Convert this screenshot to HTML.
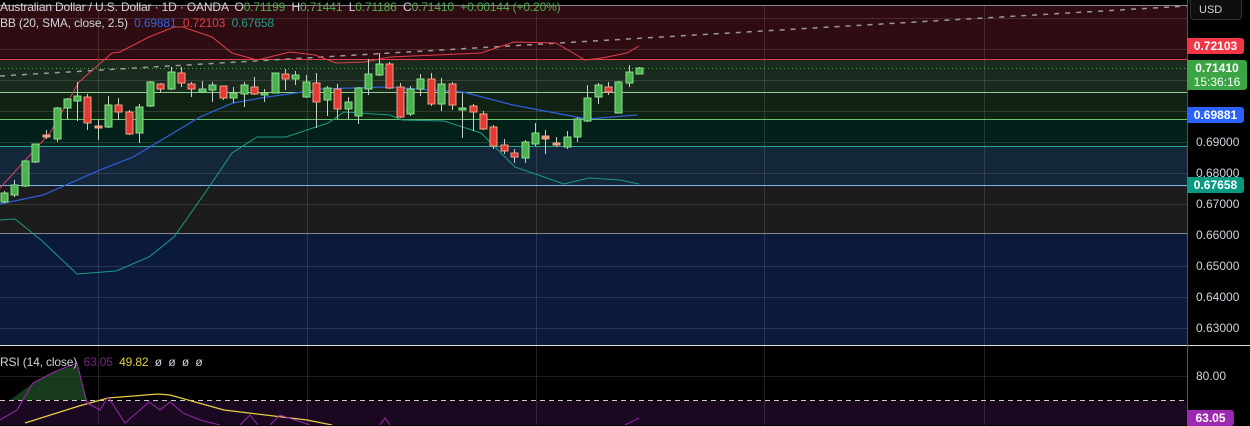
<!DOCTYPE html>
<html><head><meta charset="utf-8"><style>
body{margin:0;width:1250px;height:425px;background:#000;overflow:hidden;font-family:"Liberation Sans",sans-serif;position:relative}
svg{position:absolute;left:0;top:0}
.t{position:absolute;font-size:12px;color:#d1d4dc;white-space:nowrap;line-height:14px;letter-spacing:-0.15px}
.ax{position:absolute;left:1196px;font-size:12px;color:#d1d4dc;line-height:14px}
.b{position:absolute;left:1187px;width:57px;color:#fff;font-size:12px;font-weight:bold;text-align:center;border-radius:0 3px 3px 0;line-height:16px}
</style></head><body>
<svg width="1250" height="425" id="s">
<rect x="0" y="0" width="1187" height="5" fill="#000"/>
<rect x="0" y="5" width="1187" height="54" fill="#2e0c11"/>
<rect x="0" y="59" width="1187" height="33" fill="#1a2a1e"/>
<rect x="0" y="92" width="1187" height="27" fill="#0f2214"/>
<rect x="0" y="119" width="1187" height="27" fill="#04201a"/>
<rect x="0" y="146" width="1187" height="39" fill="#14263a"/>
<rect x="0" y="185" width="1187" height="48" fill="#1c1c1c"/>
<rect x="0" y="233" width="1187" height="112" fill="#0b1a3c"/>
<rect x="0" y="401" width="1187" height="24" fill="#1a0820"/>
<g stroke="#ffffff" stroke-opacity="0.12" stroke-width="1">
<line x1="98.5" y1="5" x2="98.5" y2="425"/><line x1="307.5" y1="5" x2="307.5" y2="425"/><line x1="536.5" y1="5" x2="536.5" y2="425"/><line x1="764.5" y1="5" x2="764.5" y2="425"/><line x1="984.5" y1="5" x2="984.5" y2="425"/>
<line x1="0" y1="18.5" x2="1187" y2="18.5"/><line x1="0" y1="49.5" x2="1187" y2="49.5"/><line x1="0" y1="80.5" x2="1187" y2="80.5"/><line x1="0" y1="111.5" x2="1187" y2="111.5"/><line x1="0" y1="142.5" x2="1187" y2="142.5"/><line x1="0" y1="173.5" x2="1187" y2="173.5"/><line x1="0" y1="204.5" x2="1187" y2="204.5"/><line x1="0" y1="266.5" x2="1187" y2="266.5"/><line x1="0" y1="297.5" x2="1187" y2="297.5"/><line x1="0" y1="328.5" x2="1187" y2="328.5"/><line x1="0" y1="376.5" x2="1187" y2="376.5"/>
</g>
<line x1="0" y1="5.5" x2="1187" y2="5.5" stroke="#888" stroke-width="1"/>
<line x1="0" y1="59.5" x2="1187" y2="59.5" stroke="#e0404a" stroke-width="1"/>
<line x1="0" y1="68.5" x2="1187" y2="68.5" stroke="#4caf50" stroke-dasharray="1 3"/>
<line x1="0" y1="92.5" x2="1187" y2="92.5" stroke="#8fd08f"/>
<line x1="0" y1="119.5" x2="1187" y2="119.5" stroke="#6cc070"/>
<line x1="0" y1="146.5" x2="1187" y2="146.5" stroke="#2aa898"/>
<line x1="0" y1="185.5" x2="1187" y2="185.5" stroke="#7ab8e8"/>
<line x1="0" y1="233.5" x2="1187" y2="233.5" stroke="#888"/>
<line x1="0" y1="345.5" x2="1250" y2="345.5" stroke="#ddd"/>
<line x1="0" y1="400.5" x2="1187" y2="400.5" stroke="#ccc" stroke-dasharray="5 4"/>
<line x1="0" y1="76" x2="1187" y2="6" stroke="#999" stroke-width="1.5" stroke-dasharray="5 6"/>
<path d="M0,220 L15,219 41,240 77,274 116,271 149,257 174,237 207,190 232,153 257,137 286,137 328,123 344,112 390,115 402,120 444,121 481,133 515,167 564,184 589,178 620,180 639,184" fill="none" stroke="#1a9c86" stroke-width="1"/>
<path d="M0,204 L43,195 100,170 133,157 200,117 233,103 267,97 317,90 320,89 387,87 463,92 513,105 587,119 637,115" fill="none" stroke="#3060e0" stroke-width="1.2"/>
<path d="M0,188 L50,133 79,82 112,53 120,52 149,37 174,27 183,27 212,37 232,53 257,60 290,52 315,55 336,63 365,62 390,57 481,53 514,42 556,43 585,60 602,58 627,53 639,46" fill="none" stroke="#e0404a" stroke-width="1"/>
<path d="M10,400 L17,395 33,383 54,372 77,365 87,400 Z" fill="#1e4a24" opacity="0.8"/>
<path d="M25,423 L79,406 108,398 158,394 170,395 224,410 307,420 332,425" fill="none" stroke="#e8d040" stroke-width="1.2"/>
<path d="M0,420 L17,410 33,383 54,372 77,363 87,403 100,410 108,397 125,423 149,402 160,410 170,402 183,413 200,420 220,425 M240,425 L250,415 258,425 M270,425 L280,415 295,420 310,425 M380,425 L385,418 390,425 M625,425 L639,418" fill="none" stroke="#9c27b0" stroke-width="1"/>
<g id="c"></g>
<line x1="1187.5" y1="0" x2="1187.5" y2="425" stroke="#555"/>
</svg>
<div class="t" style="left:0;top:0">Australian Dollar / U.S. Dollar · 1D · OANDA &nbsp;O<span style="color:#4caf50">0.71199</span> &nbsp;H<span style="color:#4caf50">0.71441</span> &nbsp;L<span style="color:#4caf50">0.71186</span> &nbsp;C<span style="color:#4caf50">0.71410</span> &nbsp;<span style="color:#4caf50">+0.00144 (+0.20%)</span></div>
<div class="t" style="left:0;top:16px">BB (20, SMA, close, 2.5) &nbsp;<span style="color:#3060e0">0.69881</span> &nbsp;<span style="color:#e0404a">0.72103</span> &nbsp;<span style="color:#1a9c86">0.67658</span></div>
<div class="t" style="left:0;top:355px">RSI (14, close) &nbsp;<span style="color:#7b1f8a">63.05</span> &nbsp;<span style="color:#e8d040">49.82</span> &nbsp;ø &nbsp;ø &nbsp;ø &nbsp;ø</div>
<div style="position:absolute;left:1190px;top:-4px;width:52px;height:24px;border:1px solid #333;border-radius:4px;background:#0e0e0e;color:#d1d4dc;font-size:11px;line-height:26px;padding-left:8px;box-sizing:border-box">USD</div>
<div class="b" style="top:38px;background:#f23645">0.72103</div>
<div class="b" style="top:60px;height:30px;width:60px;background:#3ba544;line-height:14px;padding-top:1px;box-sizing:border-box">0.71410<br><span style="font-weight:normal">15:36:16</span></div>
<div class="b" style="top:107px;background:#2962ff">0.69881</div>
<div class="ax" style="top:135px">0.69000</div>
<div class="ax" style="top:166px">0.68000</div>
<div class="b" style="top:177px;background:#089981">0.67658</div>
<div class="ax" style="top:197px">0.67000</div>
<div class="ax" style="top:228px">0.66000</div>
<div class="ax" style="top:259px">0.65000</div>
<div class="ax" style="top:290px">0.64000</div>
<div class="ax" style="top:321px">0.63000</div>
<div class="ax" style="top:369px">80.00</div>
<div class="b" style="top:410px;background:#9c27b0;width:47px">63.05</div>
<script>
var d=[[4,193,202,191,203,1],[14,185,195,180,197,1],[25,161,186,160,187,1],[35,144,162,144,163,1],[46,135,137,130,139,0],[57,108,139,107,142,1],[67,99,108,98,119,1],[77,96,101,82,121,1],[87,97,123,94,130,0],[98,126,128,120,140,0],[108,105,127,96,128,1],[118,105,112,98,120,0],[129,112,134,110,135,0],[139,107,133,104,143,1],[150,82,106,81,107,1],[160,84,89,83,92,0],[171,72,89,67,90,1],[181,73,83,67,87,0],[191,84,89,82,97,0],[202,89,92,81,92,1],[212,85,90,82,102,1],[223,86,98,86,100,0],[233,93,98,87,103,1],[244,85,94,82,107,1],[254,87,94,77,95,0],[264,93,95,89,102,1],[275,73,93,73,93,1],[285,74,79,69,90,0],[295,75,79,71,85,1],[306,82,97,75,98,1],[316,83,102,73,128,0],[327,88,100,86,116,1],[337,89,109,84,119,0],[348,102,109,97,119,1],[358,88,116,87,124,1],[368,74,89,59,95,1],[379,64,75,53,76,1],[389,64,88,62,89,0],[400,87,117,83,118,0],[410,89,114,86,116,1],[420,79,89,74,96,1],[431,79,104,73,106,0],[441,84,104,78,111,1],[452,84,105,82,110,0],[462,108,110,93,138,1],[473,106,112,104,131,0],[483,114,129,111,130,0],[493,127,146,125,149,0],[504,145,151,139,154,0],[514,153,157,149,163,0],[525,142,158,140,163,1],[535,133,144,123,146,1],[545,136,139,130,154,0],[556,143,145,137,147,0],[567,137,147,131,149,1],[577,119,137,117,142,1],[587,98,121,85,122,1],[598,85,97,83,104,1],[608,87,92,82,95,0],[618,82,113,81,113,1],[629,72,83,65,87,1],[639,68,74,67,74,1]];
var h='';d.forEach(function(c){var col=c[5]?'#4caf50':'#e53935',st=c[5]?'#8be08b':'#f0a080';
if(!c[5]&&c[2]-c[1]<4)col='#f0a080';
h+='<line x1="'+(c[0]+.5)+'" y1="'+c[3]+'" x2="'+(c[0]+.5)+'" y2="'+c[4]+'" stroke="#c8d0c8" stroke-width="1"/>';
h+='<rect x="'+(c[0]-3)+'" y="'+c[1]+'" width="7" height="'+Math.max(2,c[2]-c[1])+'" fill="'+col+'" stroke="'+st+'" stroke-width="1"/>';});
document.getElementById('c').innerHTML=h;
</script>
</body></html>
